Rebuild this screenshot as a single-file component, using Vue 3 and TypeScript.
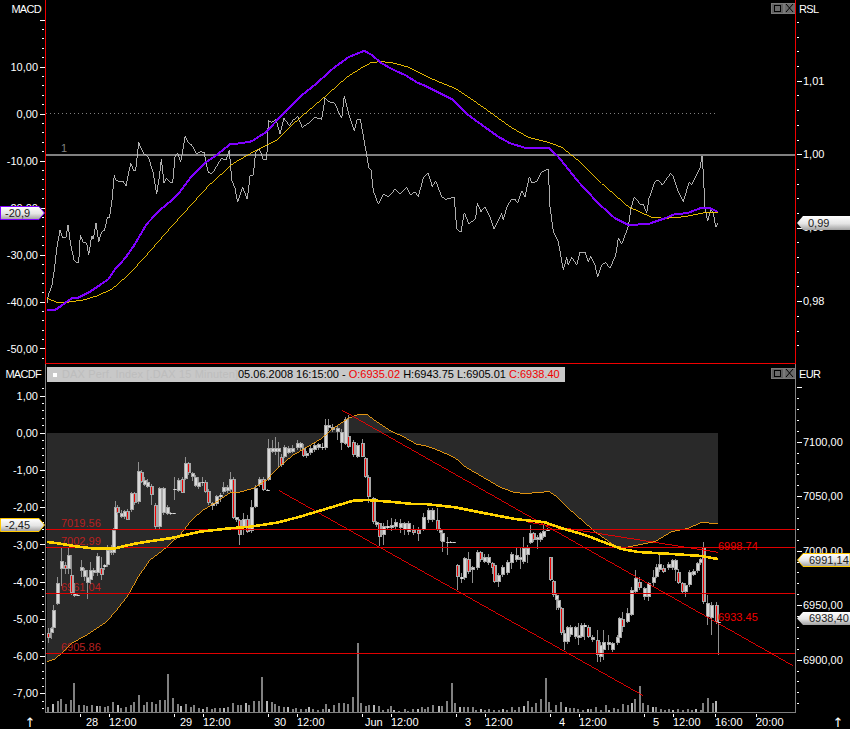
<script setup lang="ts">
// all traces were read off a 3x view of the chart, so raw values are x*3 / y*3
type Tick = { y: number; major: boolean }
type Candle = [number, number, number, number, number, number]

const range = (base: number, step: number, from: number, to: number): number[] => {
  const out: number[] = []
  for (let y = base; y >= from; y -= step) out.unshift(y)
  for (let y = base + step; y <= to; y += step) out.push(y)
  return out
}

const ticks = (base: number, step: number, every: number, from: number, to: number): Tick[] =>
  range(base, step, from, to).map((y) => {
    const k = Math.round((y - base) / step)
    return { y: Math.round(y), major: k % every === 0 }
  })

const trace = (a: number[], b: number[], top: number): [number, number][] => {
  const out: [number, number][] = []
  for (let i = 0; i < a.length; i += 2) out.push([a[i] / 3, top + a[i + 1] / 3])
  for (let i = 0; i < b.length; i += 2) out.push([425 + b[i] / 3, top + b[i + 1] / 3])
  return out
}
const str = (p: [number, number][]) => p.map(([x, y]) => `${x.toFixed(1)},${y.toFixed(1)}`).join(' ')

const rsl = str(trace(
  [141,908,145,885,155,860,163,810,170,745,180,690,187,712,198,712,204,675,212,735,222,780,228,787,236,787,241,705,250,727,260,730,266,765,275,707,280,718,288,670,296,725,305,695,314,690,322,652,328,655,336,600,343,526,347,540,358,545,368,543,378,558,392,490,402,513,407,510,416,427,425,450,433,462,445,470,460,520,470,583,478,530,484,478,492,548,500,535,510,547,518,547,525,470,533,458,542,487,556,407,563,427,575,435,590,462,600,455,612,457,625,518,635,520,645,508,655,490,665,475,678,480,688,450,695,540,705,565,713,607,728,562,742,598,750,528,760,525,767,455,778,447,790,478,800,478,805,362,815,367,828,358,840,402,852,355,868,377,880,360,893,350,907,382,925,370,945,352,965,358,975,295,985,305,1003,308,1025,355,1033,287,1047,345,1063,392,1072,358,1081,358,1100,465,1107,505,1113,510,1120,572,1135,613,1150,582,1165,590,1185,568,1200,583,1220,562,1232,585,1245,575,1255,590,1270,535],
  [0,527,10,520,22,560,32,542,50,590,62,598,88,592,95,688,108,697,118,638,132,672,152,655,157,610,168,635,180,620,195,650,207,688,230,640,235,660,245,622,260,597,270,597,278,610,290,572,300,590,313,530,320,548,335,545,350,515,370,508,375,620,385,695,400,725,415,810,425,772,430,795,440,772,455,795,465,757,480,757,490,785,497,768,510,795,518,832,530,795,542,787,555,805,572,765,580,715,590,732,610,680,618,625,628,590,645,612,655,612,665,640,672,595,690,545,700,540,712,555,737,520,745,530,760,575,775,605,793,545,800,555,825,505,831,468,835,520,840,625,848,662,858,630,865,640,872,682,878,670],
  0,
))
const macd = str(trace(
  [141,930,165,930,180,920,200,905,215,895,235,893,250,885,270,875,300,855,325,838,345,808,375,775,400,740,440,672,480,630,510,605,540,575,570,535,620,485,650,465,690,433,720,430,755,424,800,395,845,345,900,290,950,250,1000,205,1045,172,1093,152,1115,165,1145,190,1175,207,1215,225,1250,247],
  [0,257,40,277,85,300,130,345,175,378,220,410,255,430,300,443,370,443,400,470,460,545,520,610,570,655,610,675,670,672,720,655,750,642,785,640,830,623,855,625,878,635],
  0,
))
const signal = str(trace(
  [141,895,170,907,200,907,250,900,290,888,335,868,385,825,440,765,510,685,625,558,700,490,770,450,830,420,900,353,975,290,1040,232,1085,203,1115,187,1145,185,1175,188,1225,201],
  [0,227,40,245,90,265,140,298,200,340,255,380,310,412,370,427,410,442,470,490,530,550,610,620,680,652,720,655,780,650,840,638,878,637],
  0,
))

const orangeTrace = trace(
  [141,905,165,897,190,875,215,850,260,825,295,802,320,785,350,750,385,705,415,650,450,600,490,570,540,525,575,480,610,450,650,425,690,398,720,396,760,385,800,360,840,318,880,285,920,262,965,235,1000,205,1045,175,1075,163,1100,163,1130,185,1170,212,1210,230,1250,253],
  [0,257,30,267,90,293,120,320,180,355,225,382,270,398,300,400,345,398,372,394,395,410,430,445,510,515,570,558,600,563,640,555,690,545,740,515,790,505,830,487,860,490,878,490],
  360,
)
const orange = str(orangeTrace)
const histFill = str([...orangeTrace, [718, 432.5], [47, 432.5]])
const average = str(trace(
  [141,546,175,550,215,557,275,565,345,565,400,552,440,545,510,535,600,515,690,505,750,500,830,488,900,470,1000,440,1060,422,1100,420,1170,425,1240,432],
  [0,432,90,442,180,460,270,477,360,487,410,505,480,525,590,567,640,576,740,582,830,588,878,597],
  360,
))

// x, body top, body bottom, wick top, wick bottom, red body
const candlesA: Candle[] = [
  [145,818,833,805,850,1],[152,805,820,800,835,0],[160,750,805,735,810,0],[170,670,733,650,735,0],[184,603,627,565,680,0],[195,615,628,605,640,1],[205,585,627,560,640,0],[214,645,700,585,705,1],[222,700,708,670,712,0],[232,705,707,700,710,0],[243,622,632,600,650,0],[252,630,650,625,665,0],[262,650,670,630,717,0],[270,630,660,605,670,0],[278,630,640,625,650,0],[292,587,640,580,650,0],[302,625,645,590,660,1],[313,615,622,612,630,0],[322,570,615,555,620,0],[333,570,580,555,585,0],[338,510,580,505,585,0],[345,440,510,424,515,0],[352,440,460,435,465,1],[362,458,470,450,475,0],[372,452,472,450,478,0],[382,452,480,448,482,1],[392,400,450,395,455,0],[402,400,430,395,435,1],[415,333,425,305,430,0],[423,335,365,330,370,1],[432,360,375,352,378,0],[442,365,380,358,385,0],[452,378,405,372,435,1],[465,435,500,430,508,1],[478,385,500,380,505,0],[488,385,460,380,465,0],[500,440,462,435,465,0],[510,460,461,455,465,0],[518,460,461,460,461,0],
  [523,388,390,350,420,0],[535,360,393,355,398,0],[545,358,398,352,400,1],[556,310,358,292,362,0],[565,310,340,305,345,1],[575,340,350,335,362,0],[585,350,377,345,382,0],[595,365,380,350,385,0],[605,365,370,350,378,0],[615,365,395,360,400,1],[625,392,430,388,435,1],[635,430,437,425,450,0],[648,408,432,405,438,0],[660,405,410,398,425,0],[668,382,397,365,400,0],[680,380,392,375,398,0],[690,358,390,335,395,0],[698,358,473,352,478,1],[707,472,480,470,485,0],[718,480,525,478,557,1],[730,478,500,460,525,0],[740,478,515,465,520,1],[752,440,513,420,518,0],[766,385,440,375,445,0],[778,358,375,350,380,0],[790,358,390,350,392,1],[800,390,391,388,392,0],
  [805,265,360,238,365,0],[815,265,275,240,280,0],[825,265,275,230,285,0],[833,265,275,245,320,0],[842,290,315,282,322,1],[853,260,290,256,295,0],[865,265,280,258,282,0],[877,265,275,255,280,0],[890,250,265,240,270,0],[900,250,265,245,270,0],[908,265,287,252,290,1],[918,278,288,272,292,0],[930,265,280,255,285,0],[942,255,270,248,275,0],[955,252,265,248,270,0],[965,262,264,250,270,0],[976,195,265,178,270,0],[985,195,205,178,215,0],[995,200,210,192,215,0],[1010,205,215,198,240,0],[1022,215,250,208,270,0],[1035,178,252,170,255,0],[1045,228,260,165,265,1],[1058,245,285,240,290,1],[1070,255,290,250,295,0],[1085,250,290,237,292,1],[1096,295,350,292,355,1],[1105,350,412,345,430,1],[1118,415,487,412,492,1],[1128,487,495,482,500,0],[1138,490,530,488,557,1],[1150,497,525,490,557,0],[1160,497,505,480,510,0],[1172,495,505,475,515,0],[1185,487,500,478,510,0],[1200,490,505,478,520,0],[1212,490,510,485,525,0],[1225,490,515,482,525,0],[1240,510,520,495,525,1],[1255,510,523,500,542,1],[1268,470,510,460,515,0],
]
const candlesB: Candle[] = [
  [10,450,480,445,490,0],[20,450,480,445,488,0],[35,480,510,445,515,1],[45,510,520,505,545,0],[52,520,545,510,575,0],[65,545,547,530,585,0],[75,545,547,543,550,0],[85,545,546,545,546,0],
  [95,615,650,612,690,1],[108,650,658,640,670,0],[118,595,655,590,660,0],[128,597,635,575,640,1],[140,620,630,618,668,0],[155,575,625,570,630,0],[165,575,600,572,605,1],[178,590,605,582,610,0],[188,590,610,582,615,0],[200,610,625,605,640,1],[207,615,665,610,670,1],[218,645,665,640,682,0],[232,620,645,615,650,0],[245,605,640,600,645,0],[258,582,610,575,625,0],[272,585,600,560,605,0],[285,590,600,560,625,0],[293,565,605,530,610,0],[305,565,585,555,610,0],
  [315,520,548,495,552,0],[325,520,540,515,545,1],[335,530,540,525,568,0],[345,520,540,515,545,0],[355,512,530,495,535,0],[365,510,512,505,515,0],
  [375,592,660,590,662,1],[384,662,705,660,710,1],[392,705,720,700,752,0],[400,720,745,715,750,0],[408,745,820,742,825,1],[417,820,845,810,870,0],[425,800,845,798,852,0],[435,800,825,795,830,0],[450,800,830,798,838,0],[460,825,835,790,855,0],[467,795,830,790,835,0],[478,795,800,790,840,0],[490,800,830,795,835,1],[500,830,840,825,845,0],[515,840,885,810,905,1],[525,855,890,845,905,0],[535,845,870,810,900,0],[548,845,855,825,870,0],[562,850,870,845,875,0],[575,830,850,825,855,0],[582,775,835,770,840,0],[592,778,800,755,815,1],[605,760,785,745,790,0],[617,690,765,682,768,0],[630,655,695,630,700,0],[643,665,685,650,690,1],[657,685,710,680,720,0],[670,670,712,665,722,0],[683,650,670,630,680,0],[692,620,650,612,655,0],[703,612,630,585,635,0],[715,625,635,615,640,1],[728,612,625,605,630,0],[740,600,625,598,630,0],[750,600,630,598,665,0],[760,635,670,628,672,1],[770,670,695,665,700,1],[780,675,697,670,712,0],[793,635,675,630,680,0],[805,632,645,628,650,0],[815,610,632,605,638,0],[825,597,610,595,615,0],
  [835,562,725,545,730,1],[847,730,770,705,795,0],[858,735,775,725,825,0],[873,735,785,725,790,1],[878,785,787,785,883,0],
]
const allCandles = [
  ...candlesA.map((c): Candle => [c[0] / 3, c[1], c[2], c[3], c[4], c[5]]),
  ...candlesB.map((c): Candle => [425 + c[0] / 3, c[1], c[2], c[3], c[4], c[5]]),
]
const candles = allCandles.map(([x, t, b, wt, wb, r], i) => {
  const cx = Math.round(x)
  const top = Math.round(360 + t / 3)
  const bot = Math.max(Math.round(360 + b / 3), top + 1)
  return {
    id: i,
    cx,
    top,
    h: bot - top,
    wickY: Math.round(360 + wt / 3),
    wickH: Math.max(Math.round((wb - wt) / 3), 1),
    red: r === 1,
  }
})

// x, top (3x) pairs, baseline is the axis at y=712
const volA = [141,1042,157,1033,171,1024,180,1017,194,1033,210,1020,219,970,234,1036,249,1036,258,1038,272,1034,288,1038,296,1038,311,1042,321,1038,336,1027,350,1036,360,1044,374,1042,389,1034,399,1027,414,1006,429,1036,437,1027,452,1027,465,1032,477,1020,491,1020,501,942,516,1015,530,1033,540,1038,555,1033,571,1040,579,1036,594,1044,606,1048,617,1042,634,1046,643,1044,656,1044,670,1044,680,1042,695,1030,710,1036,720,1036,735,1030,745,1036,760,1024,775,1022,783,952,798,1022,812,1027,823,1033,835,1038,850,1042,860,1040,875,1046,885,1044,900,1046,915,1046,925,1040,935,1048,950,1050,965,1048,975,1033,985,1048,1000,1036,1015,1030,1030,1030,1040,1032,1055,1012,1070,850,1080,1030,1095,1038,1105,1034,1120,1034,1135,1038,1145,1050,1160,1048,1170,1038,1180,1050,1195,1052,1212,1046,1222,1052,1237,1048,1250,1048,1262,1042,1272,1046]
const volB = [5,1042,22,1036,38,1038,47,1038,62,1022,78,968,87,1030,102,1042,115,1042,125,1042,140,1042,150,1050,165,1048,178,1050,190,1046,205,1050,218,1050,230,1048,242,1050,257,1042,268,1050,280,1040,295,1038,305,1022,318,1042,330,1030,345,1018,360,955,368,1026,375,1050,390,1036,405,1026,420,1040,432,1044,445,1044,457,1046,470,1050,485,1048,495,1048,510,1042,525,1050,540,1036,550,1050,565,1044,575,1048,590,1032,605,1034,617,1030,627,1018,642,978,652,1030,665,1036,680,1040,690,1042,705,1046,718,1050,730,1048,742,1050,757,1048,770,1050,785,1048,797,1050,810,1048,825,1050,832,1028,845,1015,860,1030,870,1022]
const volume = trace(volA, volB, 360).map(([x, y], i) => ({
  id: i,
  x: Math.round(x),
  y: Math.round(y),
  h: 712 - Math.round(y),
  light: i % 5 === 1 && 712 - y < 12,
}))

const topLeftTicks = ticks(66.5, 9.4, 5, 18, 358)
const topRightTicks = ticks(80.7, 14.7, 5, 20, 358)
const lowLeftTicks = ticks(432.7, 7.44, 5, 386, 710)
const lowRightTicks = ticks(441.7, 10.9, 5, 385, 706)

const topLeftLabels = ['10,00', '0,00', '-10,00', '-20,00', '-30,00', '-40,00', '-50,00'].map((t, i) => ({ t, y: 66.5 + i * 47 + 4 }))
const topRightLabels = [['1,01', 80.7], ['1,00', 153.7], ['0,99', 227.2], ['0,98', 300.7]].map(([t, y]) => ({ t: t as string, y: (y as number) + 4 }))
const lowLeftLabels = ['1,00', '0,00', '-1,00', '-2,00', '-3,00', '-4,00', '-5,00', '-6,00', '-7,00'].map((t, i) => ({ t, y: 395.7 + i * 37.2 + 4 }))
const lowRightLabels = ['7100,00', '7050,00', '7000,00', '6950,00', '6900,00'].map((t, i) => ({ t, y: 441.7 + i * 54.5 + 4 }))

const levels = [
  { y: 529, label: '7019.56', ly: 527 },
  { y: 547, label: '7002.99', ly: 545 },
  { y: 593, label: '6961.04', ly: 591 },
  { y: 653, label: '6905.86', ly: 651 },
]

const dateTicks = [80, 109, 174, 203, 268, 297, 362, 391, 456, 485, 550, 579, 644, 673, 715, 756]
const dateLabels = [
  { x: 86, t: '28' }, { x: 109, t: '12:00' }, { x: 180, t: '29' }, { x: 203, t: '12:00' },
  { x: 274, t: '30' }, { x: 297, t: '12:00' }, { x: 365, t: 'Jun' }, { x: 391, t: '12:00' },
  { x: 465, t: '3' }, { x: 485, t: '12:00' }, { x: 559, t: '4' }, { x: 579, t: '12:00' },
  { x: 653, t: '5' }, { x: 673, t: '12:00' }, { x: 715, t: '16:00' }, { x: 756, t: '20:00' },
]
</script>

<template>
  <div class="chart">
    <svg class="pane pane-top" viewBox="0 0 850 364" width="850" height="364">
      <defs>
        <linearGradient id="tagFill" x1="0" y1="0" x2="0" y2="1">
          <stop offset="0" stop-color="#ffffff" />
          <stop offset="0.55" stop-color="#e4e4e4" />
          <stop offset="1" stop-color="#a0a0a0" />
        </linearGradient>
      </defs>

      <g class="ticks">
        <rect v-for="k in topLeftTicks" :key="k.y" :x="k.major ? 40 : 42" :y="k.y" :width="k.major ? 5 : 2" height="1" />
        <rect v-for="k in topRightTicks" :key="k.y" x="797" :y="k.y" :width="k.major ? 5 : 2" height="1" />
      </g>
      <text v-for="l in topLeftLabels" :key="l.t" class="label" x="38" :y="l.y" text-anchor="end">{{ l.t }}</text>
      <text v-for="l in topRightLabels" :key="l.t" class="label" x="803" :y="l.y">{{ l.t }}</text>
      <text class="label caption" x="41" y="13" text-anchor="end">MACD</text>
      <text class="label caption" x="799" y="13">RSL</text>

      <line class="dots" x1="46" y1="113.5" x2="717" y2="113.5" />
      <rect class="level-grey" x="46" y="154" width="749" height="2" />
      <text class="one" x="61" y="152">1</text>

      <polyline class="line rsl" :points="rsl" />
      <polyline class="line signal" :points="signal" />
      <polyline class="line macd" :points="macd" />

      <g transform="translate(771 3)">
        <rect class="btn" width="12" height="10" />
        <rect class="btn-in" x="3" y="2" width="6" height="6" />
      </g>
      <g transform="translate(784 3)">
        <rect class="btn btn-x" width="11" height="10" />
        <path class="btn-cross" d="M2 1 L9 9 M9 1 L2 9" />
      </g>

      <rect class="frame" x="45" y="0" width="1" height="364" />
      <rect class="frame" x="795" y="0" width="1" height="364" />
      <rect class="frame" x="45" y="363" width="751" height="1" />

      <polygon class="tag tag-purple" points="0.5,206.5 39,206.5 44.5,213 39,219.5 0.5,219.5" />
      <text class="tag-text" x="5" y="217">-20,9</text>
      <polygon class="tag" points="797,223 803,216 850,216 850,230 803,230" />
      <text class="tag-text" x="808" y="227">0,99</text>
    </svg>

    <div class="lower">
      <svg class="pane" viewBox="0 364 850 348" width="850" height="348">
        <polygon class="hist" :points="histFill" />

        <g class="ticks">
          <rect v-for="k in lowLeftTicks" :key="k.y" :x="k.major ? 40 : 42" :y="k.y" :width="k.major ? 5 : 2" height="1" />
          <rect v-for="k in lowRightTicks" :key="k.y" x="797" :y="k.y" :width="k.major ? 5 : 2" height="1" />
        </g>
        <text v-for="l in lowLeftLabels" :key="l.t" class="label" x="38" :y="l.y" text-anchor="end">{{ l.t }}</text>
        <text v-for="l in lowRightLabels" :key="l.t" class="label" x="803" :y="l.y">{{ l.t }}</text>
        <text class="label caption" x="41" y="378" text-anchor="end">MACDF</text>
        <text class="label caption" x="799" y="378">EUR</text>

        <text v-for="l in levels" :key="l.label" class="level-text" x="61" :y="l.ly">{{ l.label }}</text>

        <rect v-for="v in volume" :key="v.id" :class="['vol', { light: v.light }]" :x="v.x" :y="v.y" width="2" :height="v.h" />

        <g v-for="c in candles" :key="c.id">
          <rect class="wick" :x="c.cx" :y="c.wickY" width="1" :height="c.wickH" />
          <rect class="body" :x="c.cx - 1" :y="c.top" width="4" :height="c.h" />
          <rect :class="c.red ? 'core-red' : 'core-white'" :x="c.cx" :y="c.top + (c.h > 2 ? 1 : 0)" :width="c.red ? 1 : 2" :height="c.h > 2 ? c.h - 2 : c.h" />
        </g>

        <polyline class="line orange" :points="orange" />
        <rect v-for="l in levels" :key="l.y" class="level" x="46" :y="l.y" width="749" height="1" />
        <line class="line red" x1="341.7" y1="410" x2="793" y2="665.7" />
        <line class="line red" x1="279.3" y1="490.7" x2="643.3" y2="695.7" />
        <line class="line red" x1="528.3" y1="522.3" x2="717.7" y2="552.3" />
        <polyline class="line average" :points="average" />

        <text class="level-text bright" x="718" y="550">6998.74</text>
        <text class="level-text bright" x="718" y="621">6933.45</text>

        <g transform="translate(771 368)">
          <rect class="btn" width="12" height="10" />
          <rect class="btn-in" x="3" y="2" width="6" height="6" />
        </g>
        <g transform="translate(784 368)">
          <rect class="btn btn-x" width="11" height="10" />
          <path class="btn-cross" d="M2 1 L9 9 M9 1 L2 9" />
        </g>

        <rect class="axis" x="45" y="364" width="1" height="348" />
        <rect class="axis" x="795" y="364" width="1" height="348" />

        <polygon class="tag tag-yellow" points="0.5,518.5 39,518.5 44.5,525 39,531.5 0.5,531.5" />
        <text class="tag-text" x="5" y="529">-2,45</text>
        <polygon class="tag tag-yellow" points="797.5,560 803,553.5 850,553.5 850,566.5 803,566.5" />
        <text class="tag-text" x="809" y="564">6991,14</text>
        <polygon class="tag" points="797,618.5 803,612 850,612 850,625 803,625" />
        <text class="tag-text" x="809" y="622">6938,40</text>
      </svg>

      <div class="info">
        <span class="info-mark" />
        <span class="info-name">DAX Perf. Index [.DAX 15 Minuten]</span>
        <span class="info-values">05.06.2008 16:15:00 - <b>O:6935.02</b> H:6943.75 L:6905.01 <b>C:6938.40</b></span>
      </div>
    </div>

    <svg class="pane" viewBox="0 712 850 17" width="850" height="17">
      <rect class="axis" x="45" y="712" width="751" height="1" />
      <g class="ticks">
        <rect v-for="x in dateTicks" :key="x" :x="x" y="714" width="1" height="3" />
      </g>
      <text v-for="d in dateLabels" :key="d.x" class="label" :x="d.x" y="726">{{ d.t }}</text>
      <text class="arrow" x="30" y="727" text-anchor="middle">↑</text>
      <text class="arrow" x="838" y="727" text-anchor="middle">↑</text>
    </svg>
  </div>
</template>

<style>
html, body {
  background: #000;
}
</style>

<style scoped>
.chart {
  width: 850px;
  height: 729px;
  background: #000;
  display: flex;
  flex-direction: column;
  overflow: hidden;
  font-family: "Liberation Sans", Arial, sans-serif;
  font-size: 11px;
}
.pane {
  display: block;
  flex: none;
}
.lower {
  position: relative;
  height: 348px;
  flex: none;
}
.label {
  fill: #fff;
  font-size: 11px;
}
.caption {
  letter-spacing: -0.7px;
}
.arrow {
  fill: #fff;
  font-family: "DejaVu Sans", sans-serif;
  font-size: 13px;
}
.ticks rect {
  fill: #fff;
  shape-rendering: crispEdges;
}
.frame {
  fill: #f00000;
}
.axis {
  fill: #808080;
}
.dots {
  stroke: #808080;
  stroke-width: 1;
  stroke-dasharray: 1 3;
  shape-rendering: crispEdges;
}
.level-grey {
  fill: #808080;
}
.one {
  fill: #808080;
  font-size: 11px;
}
.line {
  fill: none;
  stroke-width: 0.9;
  shape-rendering: crispEdges;
}
.rsl {
  stroke: #c0c0c0;
}
.signal {
  stroke: #ffcc00;
}
.macd {
  stroke: #8000ff;
  stroke-width: 2;
}
.orange {
  stroke: #f5a010;
}
.average {
  stroke: #ffd400;
  stroke-width: 2.6;
}
.red {
  stroke: #f00000;
}
.hist {
  fill: #292929;
  shape-rendering: crispEdges;
}
.level {
  fill: #e00000;
}
.level-text {
  fill: #b82020;
  font-size: 11px;
}
.level-text.bright {
  fill: #f00000;
}
.vol {
  fill: #808080;
  shape-rendering: crispEdges;
}
.vol.light {
  fill: #b8b8b8;
}
.wick {
  fill: #909090;
  shape-rendering: crispEdges;
}
.body {
  fill: #a8a8a8;
  shape-rendering: crispEdges;
}
.core-white {
  fill: #d8d8d8;
  shape-rendering: crispEdges;
}
.core-red {
  fill: #f00000;
  shape-rendering: crispEdges;
}
.btn {
  fill: #606060;
  stroke: #7a7a7a;
  shape-rendering: crispEdges;
}
.btn-x {
  fill: #6a6a6a;
}
.btn-in {
  fill: #6a6a6a;
  stroke: #000;
  shape-rendering: crispEdges;
}
.btn-cross {
  stroke: #000;
  fill: none;
}
.tag {
  fill: url(#tagFill);
  stroke: none;
}
.tag-purple {
  stroke: #8000ff;
}
.tag-yellow {
  stroke: #ffc800;
}
.tag-text {
  fill: #202020;
  font-size: 11px;
}
.info {
  position: absolute;
  left: 47px;
  top: 3px;
  width: 518px;
  height: 15px;
  background: #c8c8c8;
  display: flex;
  align-items: center;
  white-space: pre;
  line-height: 15px;
  color: #000;
}
.info-mark {
  width: 4px;
  height: 4px;
  margin: 0 5px 0 6px;
  background: #fff;
  flex: none;
}
.info-name {
  width: 176px;
  color: #bdbdbd;
  letter-spacing: 0.15px;
  flex: none;
}
.info-values b {
  font-weight: 400;
  color: #f00000;
}
</style>
